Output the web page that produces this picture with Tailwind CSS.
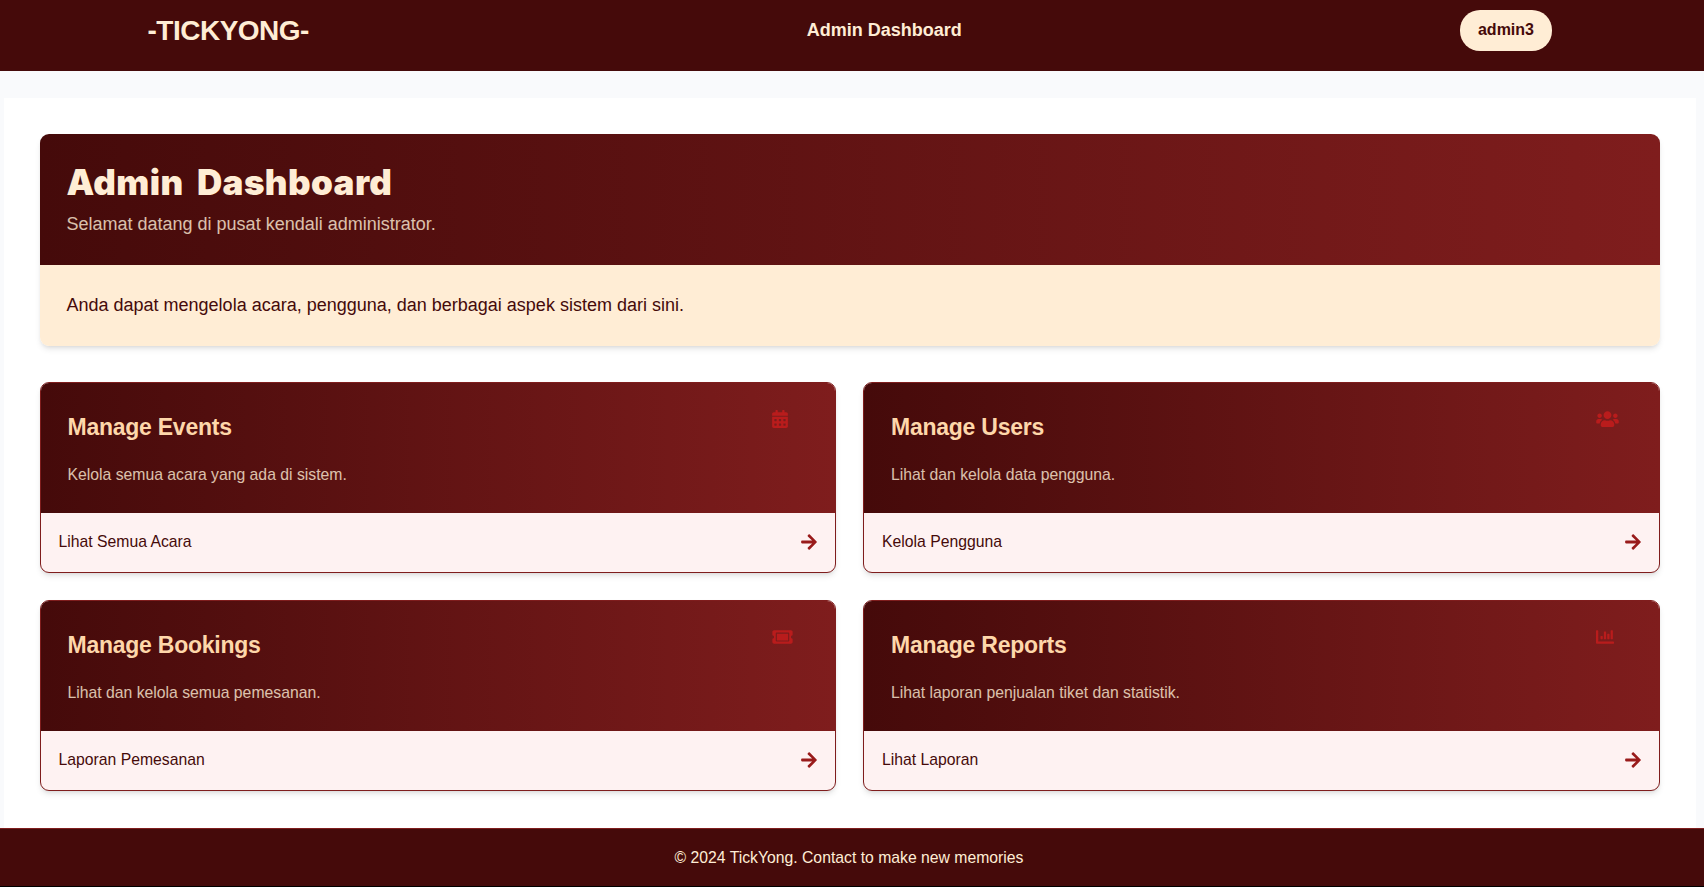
<!DOCTYPE html>
<html lang="id">
<head>
<meta charset="utf-8">
<title>Admin Dashboard</title>
<script src="https://cdn.jsdelivr.net/npm/@tailwindcss/browser@4"></script>
</head>
<body class="h-[887px] overflow-hidden bg-[#f9fafc] font-['Liberation_Sans',Arial,sans-serif] text-[#450a0a]">
<svg class="hidden">
  <symbol id="calendar" viewBox="0 0 448 512"><path d="M0 464c0 26.500 21.500 48 48 48h352c26.500 0 48-21.500 48-48V192H0v272zm320-196c0-6.600 5.400-12 12-12h40c6.600 0 12 5.400 12 12v40c0 6.600-5.400 12-12 12h-40c-6.600 0-12-5.400-12-12v-40zm0 128c0-6.600 5.400-12 12-12h40c6.600 0 12 5.400 12 12v40c0 6.600-5.400 12-12 12h-40c-6.600 0-12-5.400-12-12v-40zM192 268c0-6.600 5.400-12 12-12h40c6.600 0 12 5.400 12 12v40c0 6.600-5.400 12-12 12h-40c-6.600 0-12-5.400-12-12v-40zm0 128c0-6.600 5.400-12 12-12h40c6.600 0 12 5.400 12 12v40c0 6.600-5.400 12-12 12h-40c-6.600 0-12-5.400-12-12v-40zM64 268c0-6.600 5.400-12 12-12h40c6.600 0 12 5.400 12 12v40c0 6.600-5.400 12-12 12H76c-6.600 0-12-5.400-12-12v-40zm0 128c0-6.600 5.400-12 12-12h40c6.600 0 12 5.400 12 12v40c0 6.600-5.400 12-12 12H76c-6.600 0-12-5.400-12-12v-40zM400 64h-48V16c0-8.800-7.200-16-16-16h-32c-8.800 0-16 7.200-16 16v48H160V16c0-8.800-7.200-16-16-16h-32c-8.800 0-16 7.200-16 16v48H48C21.500 64 0 85.500 0 112v48h448v-48c0-26.500-21.500-48-48-48z"/></symbol>
  <symbol id="users" viewBox="0 0 640 512"><path d="M96 224c35.300 0 64-28.700 64-64s-28.700-64-64-64-64 28.700-64 64 28.700 64 64 64zm448 0c35.300 0 64-28.700 64-64s-28.700-64-64-64-64 28.700-64 64 28.700 64 64 64zm32 32h-64c-17.600 0-33.500 7.100-45.100 18.600 40.300 22.100 68.900 62 75.100 109.400h66c17.700 0 32-14.300 32-32v-32c0-35.300-28.700-64-64-64zm-256 0c61.900 0 112-50.100 112-112S381.900 32 320 32 208 82.100 208 144s50.100 112 112 112zm76.800 32h-8.300c-20.800 10-43.900 16-68.500 16s-47.600-6-68.500-16h-8.300C179.600 288 128 339.600 128 403.200V432c0 26.500 21.500 48 48 48h288c26.500 0 48-21.500 48-48v-28.800c0-63.600-51.600-115.200-115.200-115.200zm-223.700-13.400C161.500 263.100 145.600 256 128 256H64c-35.300 0-64 28.700-64 64v32c0 17.700 14.300 32 32 32h65.900c6.300-47.400 34.900-87.300 75.200-109.400z"/></symbol>
  <symbol id="ticket" viewBox="0 0 576 512"><path d="M128 160h320v192H128V160zm400 96c0 26.510 21.490 48 48 48v96c0 26.510-21.490 48-48 48H48c-26.510 0-48-21.490-48-48v-96c26.510 0 48-21.490 48-48s-21.490-48-48-48v-96c0-26.510 21.490-48 48-48h480c26.510 0 48 21.490 48 48v96c-26.510 0-48 21.490-48 48zm-48-104c0-13.255-10.745-24-24-24H120c-13.255 0-24 10.745-24 24v208c0 13.255 10.745 24 24 24h336c13.255 0 24-10.745 24-24V152z"/></symbol>
  <symbol id="chart" viewBox="0 0 512 512"><path d="M332.800 320h38.400c6.400 0 12.800-6.400 12.800-12.800V172.800c0-6.400-6.400-12.800-12.800-12.800h-38.400c-6.400 0-12.800 6.400-12.800 12.800v134.400c0 6.400 6.400 12.800 12.800 12.800zm96 0h38.400c6.400 0 12.800-6.400 12.800-12.800V76.800c0-6.400-6.400-12.800-12.800-12.800h-38.400c-6.400 0-12.800 6.400-12.800 12.800v230.400c0 6.400 6.400 12.800 12.800 12.800zm-288 0h38.400c6.400 0 12.800-6.400 12.800-12.800v-70.400c0-6.400-6.400-12.800-12.800-12.800h-38.400c-6.400 0-12.800 6.400-12.800 12.800v70.400c0 6.400 6.400 12.800 12.800 12.800zm96 0h38.400c6.400 0 12.800-6.400 12.800-12.800V108.800c0-6.400-6.400-12.800-12.800-12.800h-38.400c-6.400 0-12.800 6.400-12.800 12.800v198.400c0 6.400 6.400 12.800 12.800 12.800zM496 384H64V80c0-8.840-7.160-16-16-16H16C7.160 64 0 71.160 0 80v336c0 17.670 14.330 32 32 32h464c8.840 0 16-7.160 16-16v-32c0-8.840-7.160-16-16-16z"/></symbol>
  <symbol id="arrow" viewBox="0 0 448 512"><path d="M190.500 66.900l22.200-22.200c9.400-9.400 24.600-9.400 33.900 0L441 239c9.400 9.400 9.400 24.600 0 33.900L246.600 467.300c-9.400 9.400-24.600 9.400-33.900 0l-22.200-22.200c-9.500-9.500-9.300-25 .4-34.300L311.400 296H24c-13.300 0-24-10.700-24-24v-32c0-13.300 10.700-24 24-24h287.400L190.900 101.200c-9.800-9.300-10-24.800-.4-34.300z"/></symbol>
</svg>

<header class="flex h-[71px] items-start justify-between bg-[#450a0a] pl-[147.500px] pr-[152px] pt-[10px] text-[#ffedd5]">
  <div class="w-[200px] text-[28px] leading-[41px] font-bold tracking-[-0.500px]">-TICKYONG-</div>
  <div class="pl-[69px] text-[18px] leading-[40px] font-bold">Admin Dashboard</div>
  <div class="flex w-[200px] justify-end"><button class="h-[41px] w-[92px] rounded-[20px] bg-[#ffedd5] pb-[2px] text-base font-bold text-[#450a0a]">admin3</button></div>
</header>

<main class="mt-[27px] ml-1 mr-2 h-[730px] bg-white px-9 pt-9">
  <section class="overflow-hidden rounded-[9px] shadow-md">
    <div class="h-[131px] bg-linear-to-r/srgb from-[#450a0a] to-[#7f1d1d] pl-[26.5px] pt-[27px] text-[#ffedd5]">
      <h1 class="font-[Inter] text-[35px] leading-[42px] font-black tracking-[0.4px] whitespace-nowrap [word-spacing:6px]">Admin Dashboard</h1>
      <p class="mt-[8px] text-[18px] leading-[27px] opacity-80">Selamat datang di pusat kendali administrator.</p>
    </div>
    <div class="h-[81px] bg-[#ffedd5] pl-[26.5px] pt-[27px] text-[18px] leading-[27px]">Anda dapat mengelola acara, pengguna, dan berbagai aspek sistem dari sini.</div>
  </section>

  <section class="mt-9 grid grid-cols-[796px_797px] gap-[27px]">
    <article class="h-[191px] overflow-hidden rounded-[9px] border border-[#7f1d1d] bg-[#fef2f2] shadow-md">
      <div class="flex h-[130px] justify-between bg-linear-to-r/srgb from-[#450a0a] to-[#7f1d1d] py-[27px] pl-[26.5px] pr-[27px]">
        <div>
          <h2 class="text-[23px] leading-[35px] font-bold tracking-[-0.25px] text-[#fed7aa]">Manage Events</h2>
          <p class="mt-[16px] text-[15.75px] leading-[27px] text-[#ffedd5] opacity-80">Kelola semua acara yang ada di sistem.</p>
        </div>
        <div class="w-9"><svg class="h-[18px] w-[16px] fill-[#b91c1c]"><use href="#calendar"/></svg></div>
      </div>
      <a class="flex h-[59px] items-center justify-between pr-[18px] pl-[17.5px] pb-px text-[15.75px]"><span>Lihat Semua Acara</span><svg class="h-[18px] w-[16px] fill-[#991b1b]"><use href="#arrow"/></svg></a>
    </article>
    <article class="h-[191px] overflow-hidden rounded-[9px] border border-[#7f1d1d] bg-[#fef2f2] shadow-md">
      <div class="flex h-[130px] justify-between bg-linear-to-r/srgb from-[#450a0a] to-[#7f1d1d] p-[27px]">
        <div>
          <h2 class="text-[23px] leading-[35px] font-bold tracking-[-0.25px] text-[#fed7aa]">Manage Users</h2>
          <p class="mt-[16px] text-[15.75px] leading-[27px] text-[#ffedd5] opacity-80">Lihat dan kelola data pengguna.</p>
        </div>
        <div class="w-9"><svg class="h-[18px] w-[23px] fill-[#b91c1c]"><use href="#users"/></svg></div>
      </div>
      <a class="flex h-[59px] items-center justify-between px-[18px] pb-px text-[15.75px]"><span>Kelola Pengguna</span><svg class="h-[18px] w-[16px] fill-[#991b1b]"><use href="#arrow"/></svg></a>
    </article>
    <article class="h-[191px] overflow-hidden rounded-[9px] border border-[#7f1d1d] bg-[#fef2f2] shadow-md">
      <div class="flex h-[130px] justify-between bg-linear-to-r/srgb from-[#450a0a] to-[#7f1d1d] py-[27px] pl-[26.5px] pr-[27px]">
        <div>
          <h2 class="text-[23px] leading-[35px] font-bold tracking-[-0.25px] text-[#fed7aa]">Manage Bookings</h2>
          <p class="mt-[16px] text-[15.75px] leading-[27px] text-[#ffedd5] opacity-80">Lihat dan kelola semua pemesanan.</p>
        </div>
        <div class="w-9"><svg class="h-[18px] w-[21px] fill-[#b91c1c]"><use href="#ticket"/></svg></div>
      </div>
      <a class="flex h-[59px] items-center justify-between pr-[18px] pl-[17.5px] pb-px text-[15.75px]"><span>Laporan Pemesanan</span><svg class="h-[18px] w-[16px] fill-[#991b1b]"><use href="#arrow"/></svg></a>
    </article>
    <article class="h-[191px] overflow-hidden rounded-[9px] border border-[#7f1d1d] bg-[#fef2f2] shadow-md">
      <div class="flex h-[130px] justify-between bg-linear-to-r/srgb from-[#450a0a] to-[#7f1d1d] p-[27px]">
        <div>
          <h2 class="text-[23px] leading-[35px] font-bold tracking-[-0.25px] text-[#fed7aa]">Manage Reports</h2>
          <p class="mt-[16px] text-[15.75px] leading-[27px] text-[#ffedd5] opacity-80">Lihat laporan penjualan tiket dan statistik.</p>
        </div>
        <div class="w-9"><svg class="h-[18px] w-[18px] fill-[#b91c1c]"><use href="#chart"/></svg></div>
      </div>
      <a class="flex h-[59px] items-center justify-between px-[18px] pb-px text-[15.75px]"><span>Lihat Laporan</span><svg class="h-[18px] w-[16px] fill-[#991b1b]"><use href="#arrow"/></svg></a>
    </article>
  </section>
</main>

<footer class="flex h-[59px] justify-center border-t border-b border-t-[#7f1d1d] border-b-black bg-[#450a0a] pr-[6px] pt-[15px] text-[15.75px] leading-[27px] text-[#ffedd5]">© 2024 TickYong. Contact to make new memories</footer>
</body>
</html>
